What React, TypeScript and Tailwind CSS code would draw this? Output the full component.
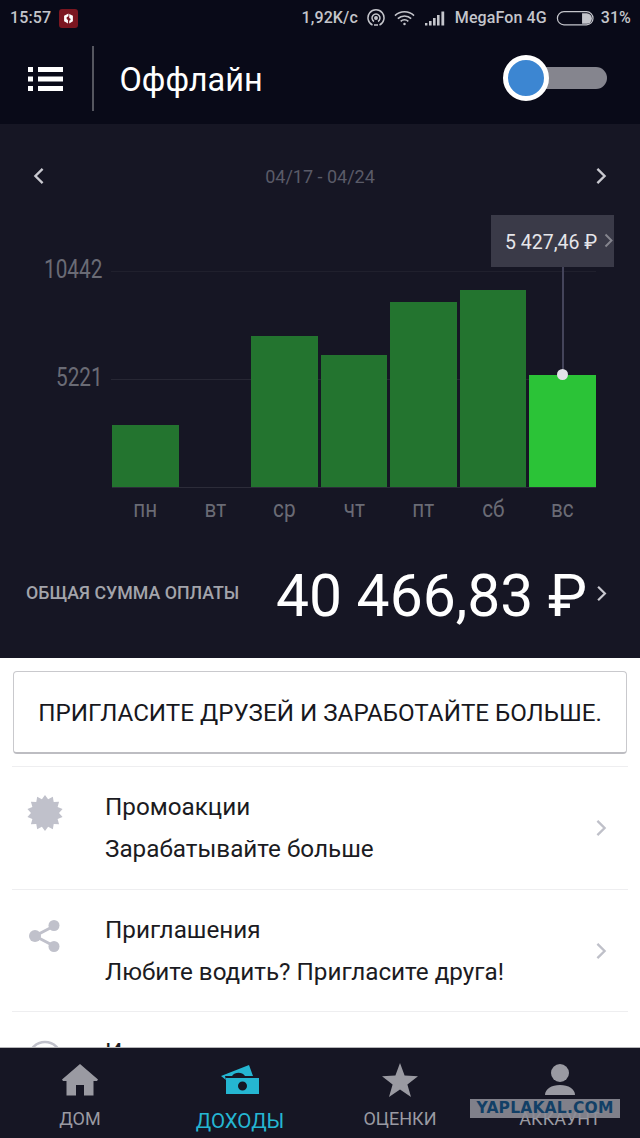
import React from "react";

function Chevron({ className, left }: { className: string; left?: boolean }) {
  return (
    <svg viewBox="0 0 12 20" className={className} fill="none" stroke="currentColor" strokeWidth="2.6">
      <path d={left ? "M10 2l-8 8 8 8" : "M2 2l8 8-8 8"} />
    </svg>
  );
}

function StatusIcons() {
  return (
    <>
      <svg viewBox="0 0 18 18" className="w-[18px] h-[18px] ml-[9px]" fill="none" stroke="#c4c5cb" strokeWidth="1.5">
        <path d="M5.5 16A8 8 0 1 1 12.5 16" />
        <path d="M7 12.5A4 4 0 1 1 11 12.5" />
        <circle cx="9" cy="9" r="1.2" fill="#c4c5cb" />
        <path d="M7 16h4" />
      </svg>
      <svg viewBox="0 0 22 16" className="w-[21px] h-[16px] ml-[9px]" fill="none" stroke="#c4c5cb" strokeWidth="1.6">
        <path d="M1 5.5a14.5 14.5 0 0 1 20 0" />
        <path d="M4 8.7a10 10 0 0 1 14 0" />
        <path d="M7 11.5a5.6 5.6 0 0 1 8 0" />
        <circle cx="11" cy="14.3" r="1.3" fill="#c4c5cb" stroke="none" />
      </svg>
      <svg viewBox="0 0 20 15" className="w-[20px] h-[15px] ml-[10px]" fill="#c4c5cb">
        <rect x="0" y="12" width="2.4" height="2.5" />
        <rect x="4" y="10" width="2.6" height="4.5" />
        <rect x="8" y="7" width="2.6" height="7.5" />
        <rect x="12" y="4" width="2.6" height="10.5" />
        <rect x="16.4" y="0.5" width="2.8" height="14" />
      </svg>
    </>
  );
}

function Battery() {
  return (
    <svg viewBox="0 0 40 16" className="w-[39px] h-[15px] ml-[9px]">
      <rect x="0.7" y="0.7" width="38" height="14" rx="7" fill="none" stroke="#c4c5cb" strokeWidth="1.3" />
      <path d="M27 2.5h5a5.5 5.5 0 0 1 0 11h-5z" fill="#c4c5cb" />
    </svg>
  );
}

function StatusBar() {
  return (
    <div className="h-[36px] flex items-center pl-[10px] pr-[9px] text-[16px] font-medium text-[#c4c5cb] tracking-[0.1px]">
      <span>15:57</span>
      <div className="ml-[8px] w-[19px] h-[19px] rounded-[3px] bg-[#7b1620] flex items-center justify-center">
        <svg viewBox="0 0 12 12" className="w-[11px] h-[11px]" fill="#fff">
          <path d="M6 0.5L1.2 3v6L5.4 11.4V7.5L4 6.6V4.6L6 3.6z" />
          <path d="M6.8 1v4.4L8.2 6.2V7.6L6.8 8.4V11.4L10.8 9V3z" />
        </svg>
      </div>
      <span className="ml-auto">1,92K/c</span>
      <StatusIcons />
      <span className="ml-[10px]">MegaFon 4G</span>
      <Battery />
      <span className="ml-[6px]">31%</span>
    </div>
  );
}

function Toolbar() {
  return (
    <div className="h-[88px] flex items-center pl-[28px] pr-[33px]">
      <svg viewBox="0 0 35 24" className="w-[35px] h-[24px] -mt-[2px]" fill="#fff">
        <rect x="0" y="0" width="5" height="5" />
        <rect x="10" y="0" width="25" height="5" />
        <rect x="0" y="9.5" width="5" height="5" />
        <rect x="10" y="9.5" width="25" height="5" />
        <rect x="0" y="19" width="5" height="5" />
        <rect x="10" y="19" width="25" height="5" />
      </svg>
      <div className="ml-[29px] w-[1.5px] h-[65px] bg-[#55565f] -mt-[4px]" />
      <div className="ml-[26px] text-[32.5px] leading-none text-white">Оффлайн</div>
      <div className="ml-auto relative w-[102px] h-[22px] rounded-full bg-[#85858e] -mt-[4px]">
        <div className="absolute left-[-2px] top-[-12px] w-[46px] h-[46px] rounded-full bg-[#3c86d2] border-[5px] border-white" />
      </div>
    </div>
  );
}

const bars = [
  { h: 62, d: "пн" },
  { h: 0, d: "вт" },
  { h: 151, d: "ср" },
  { h: 132, d: "чт" },
  { h: 185, d: "пт" },
  { h: 197, d: "сб" },
  { h: 112, d: "вс", active: true },
];

function Chart() {
  return (
    <div className="relative">
      <div className="absolute left-[44px] top-[59px] text-[25px] leading-[30px] text-[#6a6b75] scale-x-[0.83] origin-left">10442</div>
      <div className="absolute left-[56px] top-[167px] text-[25px] leading-[30px] text-[#6a6b75] scale-x-[0.83] origin-left">5221</div>
      <div className="absolute left-[111px] right-[44px] top-[75px] h-px bg-[#20202d]" />
      <div className="absolute left-[111px] right-[44px] top-[183px] h-px bg-[#272734]" />
      <div className="absolute left-[112px] right-[44px] top-[291px] h-px bg-[#2c2c39]" />
      <div className="absolute left-[491px] top-[19px] w-[123px] h-[52px] bg-[#3a3a48] flex items-center pl-[14px] pt-[3px] text-[19.5px] text-[#e6e6ea] z-10">
        <span className="whitespace-nowrap">5 427,46 ₽</span>
        <Chevron className="absolute right-[1px] top-[18px] w-[9px] h-[15px] text-[#85858e]" />
      </div>
      <div className="absolute left-[562px] top-[71px] w-[2px] h-[108px] bg-[#44445a] z-10" />
      <div className="absolute left-[557px] top-[173px] w-[11px] h-[11px] rounded-full bg-[#e2e2e8] z-10" />
      <div className="relative ml-[112px] w-[484px] h-[291px] grid grid-cols-7 gap-x-[3px] items-end">
        {bars.map((b) => (
          <div
            key={b.d}
            className={b.active ? "bg-[#2bc337]" : "bg-[#23742f]"}
            style={{ height: b.h }}
          />
        ))}
      </div>
      <div className="ml-[112px] w-[484px] grid grid-cols-7 gap-x-[3px] mt-[9px] text-center text-[23px] leading-[28px] text-[#6a6b75]">
        {bars.map((b) => (
          <div key={b.d} className="scale-x-[0.9]">{b.d}</div>
        ))}
      </div>
    </div>
  );
}

function Earnings() {
  return (
    <div className="h-[534px] bg-[#161624] shrink-0 pt-[32px]">
      <div className="h-[40px] flex items-center pl-[33px] pr-[33px] text-[#c9c9d0]">
        <Chevron left className="w-[12px] h-[18px]" />
        <div className="flex-1 text-center text-[18px] text-[#5a5b68]">04/17 - 04/24</div>
        <Chevron className="w-[12px] h-[18px]" />
      </div>
      <Chart />
      <div className="mt-[38px] flex items-start pl-[26px] pr-[33px]">
        <div className="mt-[19px] text-[17.8px] leading-[24px] font-medium text-[#a3a4ab] whitespace-nowrap">ОБЩАЯ СУММА ОПЛАТЫ</div>
        <div className="ml-auto mt-[3px] text-[58.8px] leading-[62px] text-white whitespace-nowrap">40 466,83 ₽</div>
        <Chevron className="ml-[9px] mt-[23px] w-[11px] h-[17px] text-[#c9c9d0]" />
      </div>
    </div>
  );
}

function Row({ icon, title, sub }: { icon: React.ReactNode; title: string; sub: string }) {
  return (
    <div className="mx-[12px] h-[122.5px] border-t border-[#eeeef0] flex pt-[19px] relative shrink-0">
      <div className="w-[93px] shrink-0 pl-[15px] pt-[9px]">{icon}</div>
      <div className="text-[24.25px] leading-[42px] text-[#1b1b22]">
        <div>{title}</div>
        <div>{sub}</div>
      </div>
      <Chevron className="absolute right-[21px] top-[52px] w-[12px] h-[18px] text-[#bfc0c9]" />
    </div>
  );
}

function starPoints() {
  const pts: string[] = [];
  const n = 14;
  for (let i = 0; i < n * 2; i++) {
    const r = i % 2 === 0 ? 18 : 14;
    const a = (Math.PI * i) / n;
    pts.push(`${(18 + r * Math.sin(a)).toFixed(2)},${(18 - r * Math.cos(a)).toFixed(2)}`);
  }
  return pts.join(" ");
}

function Content() {
  return (
    <div className="flex-1 min-h-0 bg-white overflow-hidden">
      <div className="mx-[13px] mt-[13px] mb-[12px] h-[83px] pt-[3px] rounded-[4px] border border-[#c9c9cd] border-b-2 border-b-[#bdbdc2] flex items-center justify-center text-[24.2px] text-[#17171d] whitespace-nowrap">
        ПРИГЛАСИТЕ ДРУЗЕЙ И ЗАРАБОТАЙТЕ БОЛЬШЕ.
      </div>
      <Row
        title="Промоакции"
        sub="Зарабатывайте больше"
        icon={
          <svg viewBox="0 0 36 36" className="w-[36px] h-[36px]" fill="#c0c1cb">
            <polygon points={starPoints()} />
          </svg>
        }
      />
      <Row
        title="Приглашения"
        sub="Любите водить? Пригласите друга!"
        icon={
          <svg viewBox="0 0 36 36" className="w-[36px] h-[36px]" fill="#c0c1cb" stroke="#c0c1cb">
            <path d="M27 8L8 18l19 10" fill="none" strokeWidth="3" />
            <circle cx="27" cy="7.5" r="5.5" stroke="none" />
            <circle cx="8" cy="18" r="6" stroke="none" />
            <circle cx="27" cy="28.5" r="5.5" stroke="none" />
          </svg>
        }
      />
      <Row
        title="История"
        sub=""
        icon={
          <svg viewBox="0 0 36 36" className="w-[36px] h-[36px]" fill="none" stroke="#c0c1cb" strokeWidth="2.5">
            <circle cx="18" cy="18" r="16" />
            <path d="M18 8v10l7 5" />
          </svg>
        }
      />
    </div>
  );
}

function Tab({ icon, label, active }: { icon: React.ReactNode; label: string; active?: boolean }) {
  return (
    <div className="flex flex-col items-center">
      <div className="h-[36px] mt-[14px] flex items-center justify-center">{icon}</div>
      <div
        className={
          active
            ? "text-[20.5px] leading-[26px] mt-[10px] text-[#25b6d2]"
            : "text-[18px] leading-[24px] mt-[9px] text-[#9a9aa2]"
        }
      >
        {label}
      </div>
    </div>
  );
}

function TabBar() {
  return (
    <div className="relative h-[91px] shrink-0 bg-[#161624] border-t border-[#b5b5b8] grid grid-cols-4">
      <Tab
        label="ДОМ"
        icon={
          <svg viewBox="0 0 36 32" className="w-[36px] h-[32px]" fill="#9a9aa2">
            <path d="M18 0L0 15.5l1 1.5h3.5v14.5h9.5V21h8v10.5h9.5V17H35l1-1.5z" />
          </svg>
        }
      />
      <Tab
        active
        label="ДОХОДЫ"
        icon={
          <svg viewBox="0 0 38 30" className="w-[38px] h-[30px]" fill="#25b6d2">
            <path d="M0 11L28 0l4 11H24a8 8 0 0 0-13 0H4l1 4z" />
            <path fillRule="evenodd" d="M5 13h33v16H5zM21.5 16.5a4.5 4.5 0 1 0 0 9 4.5 4.5 0 0 0 0-9z" />
          </svg>
        }
      />
      <Tab
        label="ОЦЕНКИ"
        icon={
          <svg viewBox="0 0 36 34" className="w-[36px] h-[34px]" fill="#9a9aa2">
            <path d="M18 0l4.6 12.6L36 13.2l-10.6 8.2L29 34l-11-7.4L7 34l3.6-12.6L0 13.2l13.4-.6z" />
          </svg>
        }
      />
      <Tab
        label="АККАУНТ"
        icon={
          <svg viewBox="0 0 32 32" className="w-[32px] h-[32px]" fill="#9a9aa2">
            <circle cx="16" cy="9" r="9" />
            <path d="M1 31c0-6 6.5-10 15-10s15 4 15 10z" />
          </svg>
        }
      />
      <div className="absolute left-[470px] top-[51px] w-[150px] h-[19px] bg-[#8c8c96]/90 flex items-center justify-center text-[15.5px] leading-none font-black tracking-[0.2px] text-[#123f66] font-['DejaVu_Sans']">
        YAPLAKAL.COM
      </div>
    </div>
  );
}

export default function App() {
  return (
    <div className="w-[640px] h-[1138px] flex flex-col overflow-hidden bg-white font-['Roboto',sans-serif]">
      <div className="h-[124px] shrink-0 bg-[#090a18]">
        <StatusBar />
        <Toolbar />
      </div>
      <Earnings />
      <Content />
      <TabBar />
    </div>
  );
}
